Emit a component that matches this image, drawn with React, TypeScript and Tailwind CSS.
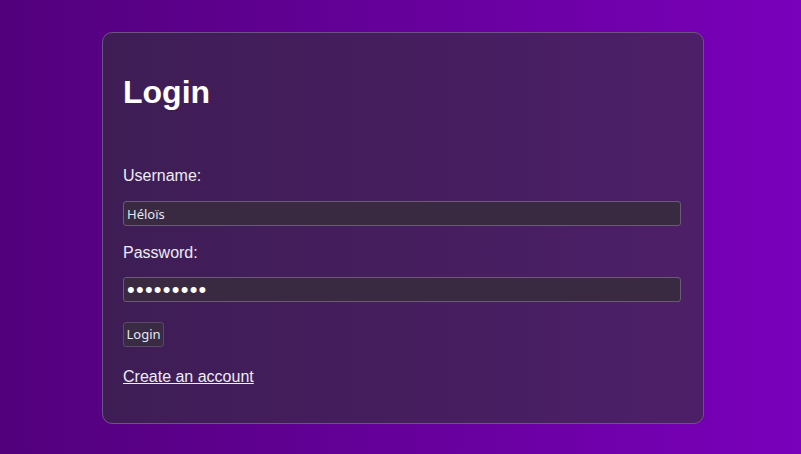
export default function App() {
  return (
    <div className="min-h-[454px] w-full overflow-hidden bg-gradient-to-r from-[#52007c] to-[#7a00bb] pt-[32px] font-['Liberation_Sans',Arial,sans-serif]">
      {/* Login card */}
      <div className="ml-[102px] h-[392px] w-[602px] rounded-[10px] border border-[#6c5480] bg-gradient-to-r from-[#3e1d55] to-[#4d1f68] px-[20px] pt-[20px]">
        <h1 className="mt-[21px] h-[37px] text-[32px] font-bold leading-[37px] text-white">Login</h1>

        <label className="mt-[55px] block h-[19px] text-[16px] leading-[19px] text-[#ececf4]">Username:</label>
        <input
          type="text"
          defaultValue="Héloïs"
          className="mt-[16px] block h-[25px] w-[558px] rounded-[3px] border border-[#6a5a78] bg-[#392a42] px-[3px] font-['Noto_Sans',sans-serif] text-[13px] text-[#e6e6ee] outline-none"
        />

        <label className="mt-[17px] block h-[19px] text-[16px] leading-[19px] text-[#ececf4]">Password:</label>
        <input
          type="password"
          defaultValue="secret123"
          className="mt-[15px] block h-[25px] w-[558px] rounded-[3px] border border-[#6a5a78] bg-[#392a42] px-[3px] font-['Liberation_Sans',sans-serif] text-[22px] leading-[23px] tracking-[1.25px] text-white outline-none"
        />

        <button className="mt-[20px] block h-[25px] w-[41px] rounded-[3px] border border-[#5a4a66] bg-[#3a2b45] font-['Noto_Sans',sans-serif] text-[13px] text-[#e6e6ee]">
          Login
        </button>

        <a href="#" className="mt-[20px] block w-fit text-[16px] leading-[19px] text-[#ececf4] underline">
          Create an account
        </a>
      </div>
    </div>
  )
}
